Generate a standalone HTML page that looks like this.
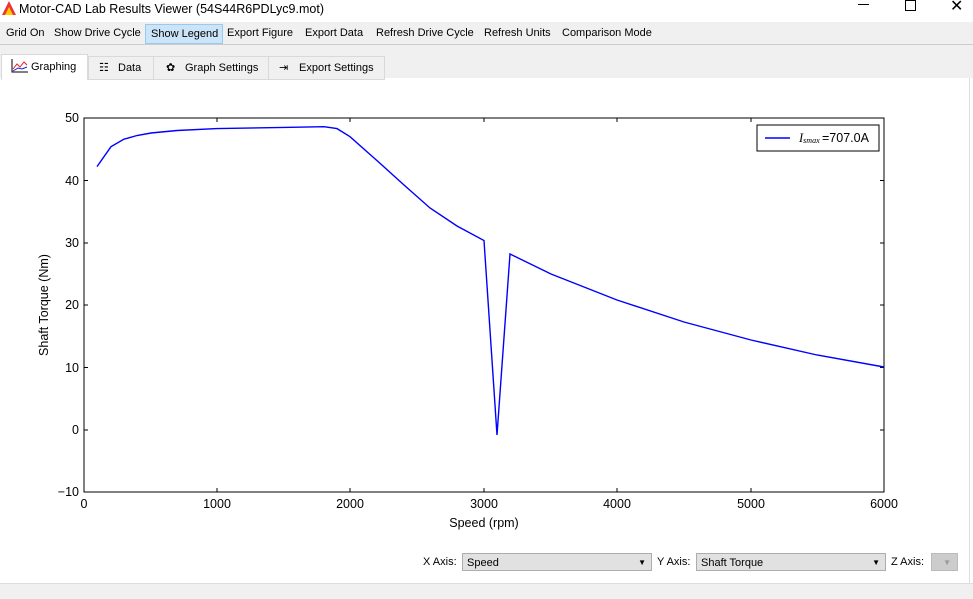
<!DOCTYPE html><html><head><style>
body{margin:0;width:973px;height:598px;overflow:hidden;background:#fff;font-family:"Liberation Sans",sans-serif;font-size:12px;position:relative}
.a{position:absolute}
.menu span{position:absolute;top:27px;font-size:11px}
.tab{position:absolute;top:56px;height:22px;border:1px solid #d9d9d9;background:#f0f0f0;line-height:22px;font-size:11px}
.sel{position:absolute;top:553px;height:18px;border:1px solid #adadad;background:#e1e1e1;line-height:18px;font-size:11px;padding-left:4px;box-sizing:border-box}
.lbl{position:absolute;top:556px;font-size:11px}
</style></head><body>
<div class="a" style="left:0;top:0;width:973px;height:22px;background:#fff"></div>
<svg class="a" style="left:2px;top:1px" width="14" height="14"><polygon points="0,14 7,0 14,14" fill="#e33"/><polygon points="3,14 7,6 11,14" fill="#fc0"/></svg>
<div class="a" style="left:19px;top:2px;font-size:12.5px">Motor-CAD Lab Results Viewer (54S44R6PDLyc9.mot)</div>
<div class="a" style="left:858px;top:4px;width:11px;height:1px;background:#000"></div>
<div class="a" style="left:905px;top:0px;width:9px;height:9px;border:1px solid #000"></div>
<div class="a" style="left:950px;top:-4px;font-size:16px">✕</div>
<div class="a" style="left:0;top:22px;width:973px;height:22px;background:#f0f0f0;border-bottom:1px solid #ccc"></div>
<div class="a" style="left:145px;top:24px;width:76px;height:18px;background:#cce4f7;border:1px solid #99c9ef"></div>
<div class="menu">
<span style="left:6px">Grid On</span><span style="left:54px">Show Drive Cycle</span><span style="left:151px;top:28px">Show Legend</span><span style="left:227px">Export Figure</span><span style="left:305px">Export Data</span><span style="left:376px">Refresh Drive Cycle</span><span style="left:484px">Refresh Units</span><span style="left:562px">Comparison Mode</span></div>
<div class="a" style="left:0;top:45px;width:973px;height:33px;background:#f0f0f0"></div>
<div class="tab" style="left:88px;width:64px"><span style="position:absolute;left:10px;top:0">☷</span><span style="position:absolute;left:29px">Data</span></div>
<div class="tab" style="left:153px;width:114px"><span style="position:absolute;left:12px;top:0">✿</span><span style="position:absolute;left:31px">Graph Settings</span></div>
<div class="tab" style="left:268px;width:115px"><span style="position:absolute;left:10px;top:0">⇥</span><span style="position:absolute;left:30px">Export Settings</span></div>
<div class="tab" style="left:1px;top:54px;width:85px;height:25px;background:#fff;border-bottom:none"><svg style="position:absolute;left:9px;top:4px" width="18" height="14"><path d="M1,0V13H17" stroke="#000" fill="none"/><path d="M2,10 6,5 9,8 13,3 16,6" stroke="#d22" fill="none"/><path d="M2,12 7,9 11,10 16,8" stroke="#22d" fill="none"/></svg><span style="position:absolute;left:29px;top:1px">Graphing</span></div>
<div class="a" style="left:0;top:583px;width:973px;height:15px;background:#f0f0f0;border-top:1px solid #ddd"></div>
<div class="a" style="left:969px;top:78px;width:1px;height:505px;background:#ddd"></div>
<svg class="a" style="left:0;top:0" width="973" height="598" font-family="Liberation Sans" font-size="12.5">
<rect x="84" y="118" width="800" height="374" fill="none" stroke="#000"/>
<g stroke="#000">
<path d="M84,118v4M217,118v4M350,118v4M484,118v4M617,118v4M751,118v4M884,118v4M84,492v-4M217,492v-4M350,492v-4M484,492v-4M617,492v-4M751,492v-4M884,492v-4"/>
<path d="M84,118h4M84,180.5h4M84,243h4M84,305h4M84,367.5h4M84,430h4M884,118h-4M884,180.5h-4M884,243h-4M884,305h-4M884,367.5h-4M884,430h-4"/></g>
<g text-anchor="end"><text x="79" y="122">50</text><text x="79" y="185">40</text><text x="79" y="247">30</text><text x="79" y="309">20</text><text x="79" y="372">10</text><text x="79" y="434">0</text><text x="79" y="496">−10</text></g>
<g text-anchor="middle"><text x="84" y="508">0</text><text x="217" y="508">1000</text><text x="350" y="508">2000</text><text x="484" y="508">3000</text><text x="617" y="508">4000</text><text x="751" y="508">5000</text><text x="884" y="508">6000</text>
<text x="484" y="527">Speed  (rpm)</text>
<text transform="translate(48,305) rotate(-90)">Shaft Torque  (Nm)</text></g>
<polyline fill="none" stroke="#00f" stroke-width="1.4" points="97,166.6 111,146.7 124,139.2 137,135.5 151,133 177,130.5 217,128.6 284,127.4 324,126.7 337,128.6 350,136.7 377,160.6 404,185 430,208 457,226 484,240.5 497,435 510,254 551,274 617,300 684,322 751,340 817,355 884,367"/>
<rect x="757" y="125" width="122" height="26" fill="#fff" stroke="#000"/>
<path d="M765,138h25" stroke="#00f" stroke-width="1.4"/>
<text x="799" y="142" font-family="Liberation Serif" font-style="italic">I<tspan font-size="8" dy="1">smax</tspan></text><text x="822" y="142">=707.0A</text>
</svg>
<div class="lbl" style="left:423px">X Axis:</div>
<div class="sel" style="left:462px;width:190px">Speed<span style="position:absolute;right:5px;font-size:8px">▼</span></div>
<div class="lbl" style="left:657px">Y Axis:</div>
<div class="sel" style="left:696px;width:190px">Shaft Torque<span style="position:absolute;right:5px;font-size:8px">▼</span></div>
<div class="lbl" style="left:891px">Z Axis:</div>
<div class="sel" style="left:931px;width:27px;background:#ccc;border-color:#bbb"><span style="position:absolute;right:6px;font-size:8px;color:#999">▼</span></div>
</body></html>
